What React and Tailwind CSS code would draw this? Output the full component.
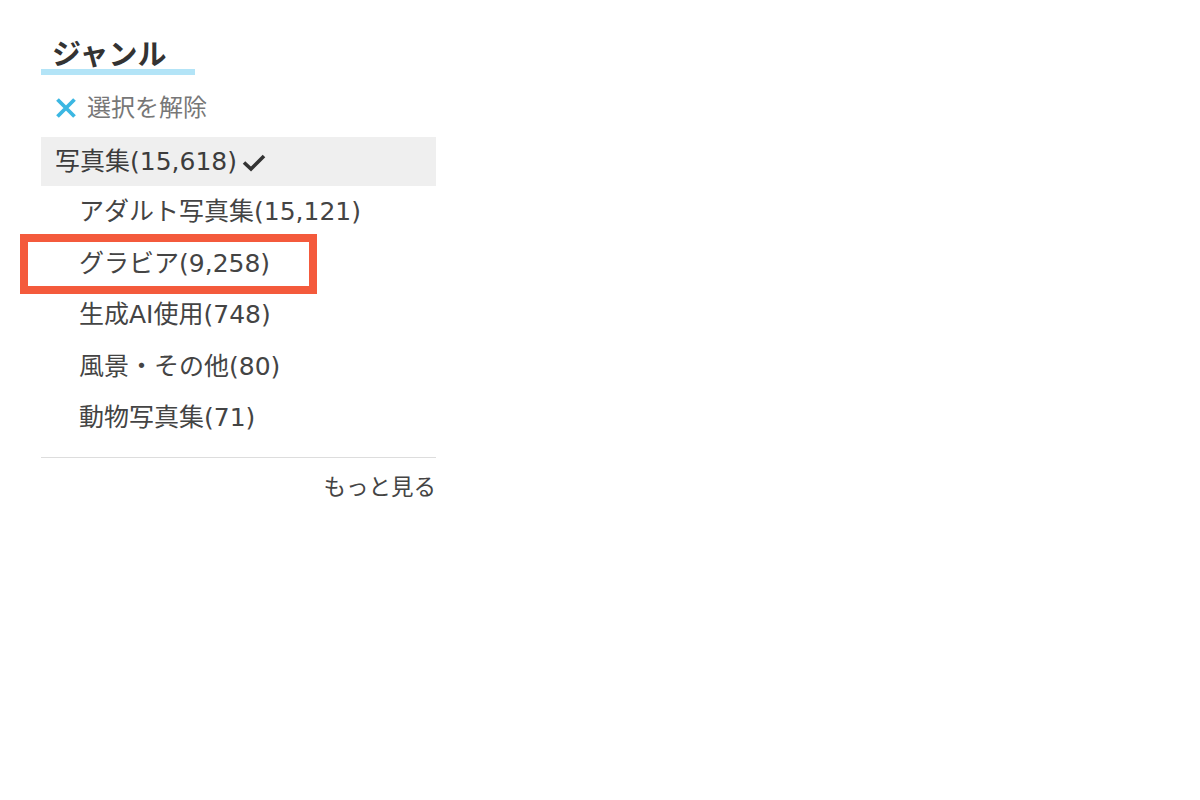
import React from 'react'

const subGenres = [
  { label: 'アダルト写真集', count: '15,121' },
  { label: 'グラビア', count: '9,258', marked: true },
  { label: '生成AI使用', count: '748' },
  { label: '風景・その他', count: '80' },
  { label: '動物写真集', count: '71' }
]

// latin glyphs first (wide, Meiryo-like digits), then CJK
const font = { fontFamily: '"DejaVu Sans", "Noto Sans CJK JP", sans-serif' }

export default function App() {
  return (
    <div className="min-h-[800px] w-[1200px] bg-white" style={font}>
      <div className="ml-[41px] w-[395px] pt-[38px]">
        <div className="inline-block w-[154px] border-b-[6px] border-[#b3e4f7] pl-[11px]">
          <h2 className="pt-[3px] text-[29px] font-bold leading-[28px] text-[#333]">ジャンル</h2>
        </div>

        <div className="mt-[18px] flex h-[30px] items-center pl-[14px] text-[24px] text-[#777]">
          <svg width="22" height="22" viewBox="0 0 22 22" className="mr-[10px]">
            <path d="M2.5 2.5 L19.5 19.5 M19.5 2.5 L2.5 19.5" stroke="#3bb7e2" strokeWidth="3.8" />
          </svg>
          <span>選択を解除</span>
        </div>

        <div className="mt-[14px] flex h-[49px] items-center bg-[#efefef] pl-[14px] text-[25px] text-[#3c3c3c]">
          <span>写真集(15,618)</span>
          <svg width="28" height="22" viewBox="0 0 28 22" className="ml-[3px]">
            <path d="M4 11.5 L11 18 L24 5" stroke="#333" strokeWidth="3.6" fill="none" />
          </svg>
        </div>

        <ul>
          {subGenres.map((g) => (
            <li
              key={g.label}
              className="relative flex h-[51.5px] items-center pl-[38px] text-[25px] text-[#444]"
            >
              {g.label}({g.count})
              {g.marked && (
                <span className="pointer-events-none absolute left-[-21px] top-[-4px] h-[60px] w-[297px] border-[8px] border-[#f45a3c]" />
              )}
            </li>
          ))}
        </ul>

        <div className="mt-[13px] border-t border-[#dddddd]" />
        <div className="mt-[14px] text-right text-[22.5px] leading-[30px] text-[#444]">もっと見る</div>
      </div>
    </div>
  )
}
